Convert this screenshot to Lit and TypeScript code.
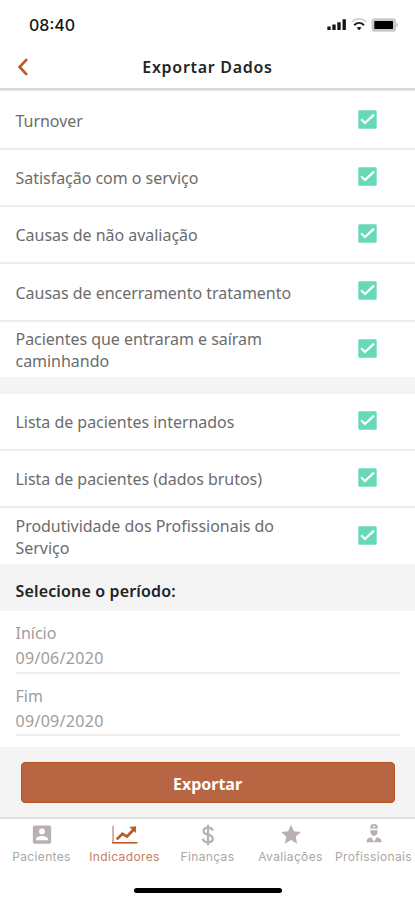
import { LitElement, html, svg, css } from "lit";
import { customElement, property } from "lit/decorators.js";
import { classMap } from "lit/directives/class-map.js";

@customElement("check-row")
class CheckRow extends LitElement {
  @property() label = "";
  static styles = css`
    :host { box-sizing: border-box; height: 57.3px; display: flex; align-items: center; padding: 0 38px 0 15.5px; background: #fff; border-bottom: 2px solid #ececec; }
    :host([last]) { height: 55.8px; border-bottom: 0; }
    .label { width: 290px; font-size: 16px; line-height: 21.6px; letter-spacing: -.03px; color: #6c6c6c; padding-top: 3px; }
    svg { width: 19px; height: 19px; margin-left: auto; margin-top: -2px; display: block; }
  `;
  render() {
    return html`<div class="label">${this.label}</div>
      <svg viewBox="0 0 19 19"><rect x=".3" y=".3" width="18.4" height="18.4" rx="1.3" fill="#67d9b8"/><path d="M3.2 9.2 7 13 16 4.6" fill="none" stroke="#fff" stroke-width="2.3"/></svg>`;
  }
}

const icons = {
  patients: svg`<path fill-rule="evenodd" d="M4 1.5h16a2 2 0 0 1 2 2v16a2 2 0 0 1-2 2H4a2 2 0 0 1-2-2v-16a2 2 0 0 1 2-2Zm8 3.4a3.2 3.2 0 1 0 0 6.4 3.2 3.2 0 0 0 0-6.4ZM5.5 17.6h13v-1.1c0-2.3-3.8-3.5-6.5-3.5s-6.5 1.2-6.5 3.5Z"/>`,
  chart: svg`<path d="M-1 2v18.5" stroke="#d7aa97" stroke-width="2"/><path d="M-2 20.5h27.5" stroke="currentColor" stroke-width="1.8"/><path d="m3 16.8 6.2-6.2 5 3.1 7-7.4" fill="none" stroke="currentColor" stroke-width="3"/><path d="m16.7 3.4 7.5-.9-.5 7.4Z"/>`,
  money: svg`<path d="M12 .8v22.4M17.1 7.2C16.7 5 14.8 4 12.1 4 9.2 4 7.2 5.4 7.2 7.8c0 5.2 10 2.4 10 8 0 2.6-2.2 4.2-5.2 4.2-3.2 0-5.2-1.5-5.5-4" fill="none" stroke="currentColor" stroke-width="2.5"/>`,
  star: svg`<path d="m12 .8 3.2 7.1 7.5.8-5.6 5.1 1.7 7.7-6.8-4-6.8 4 1.7-7.7-5.6-5.1 7.5-.8Z"/>`,
  worker: svg`<path d="M8 5.3V3.2C8 .9 9.5 0 12 0s4 .9 4 3.2v2.1Z"/><path d="M10.3 3h3.4M12 1.5v3" stroke="#fff" stroke-width=".7"/><path d="M8 6.8h8v1.4c0 2.6-1.6 4.8-4 4.8s-4-2.2-4-4.8Z"/><path d="M3.7 20c0-3.6 1.9-5.3 5.3-5.6l2.7 4.4V20Zm16.6 0c0-3.6-1.9-5.3-5.3-5.6l-2.7 4.4V20Z"/>`,
};

@customElement("app-root")
class AppRoot extends LitElement {
  static styles = css`
    :host { display: flex; flex-direction: column; box-sizing: border-box; width: 415px; height: 900px; overflow: hidden; background: #fff; font-family: "Noto Sans", "Open Sans", sans-serif; }
    .status { flex: none; display: flex; justify-content: space-between; align-items: center; height: 50px; padding: 0 17px 0 29px; box-sizing: border-box; font: 500 16px Inter, sans-serif; color: #151515; }
    .status svg { width: 74px; height: 16px; display: block; }
    header { flex: none; height: 40px; box-sizing: border-box; display: grid; grid-template-columns: 50px 1fr 50px; align-items: center; border-bottom: 2px solid #d8d8d8; box-shadow: 0 1px 1px #e8e8e8; margin-bottom: 2.4px; padding-bottom: 4px; z-index: 1; }
    header svg { width: 10px; height: 18px; margin-left: 18px; }
    h1 { margin: 0; text-align: center; font-size: 16px; font-weight: 600; line-height: 22px; letter-spacing: .7px; color: #252525; }
    .list { flex: none; display: flex; flex-direction: column; }
    .gap { flex: none; height: 16.3px; background: #f4f4f4; }
    .period { flex: none; height: 46.8px; box-sizing: border-box; display: flex; align-items: center; padding: 7px 15.5px 0; background: #f4f4f4; color: #222; font-size: 16px; font-weight: 600; letter-spacing: .15px; }
    .dates { flex: none; height: 135.7px; box-sizing: border-box; padding: 0 15px 0 15.5px; }
    .field { height: 62.7px; box-sizing: border-box; padding-top: 10px; border-bottom: 2px solid #eee; color: #a09c9b; font-size: 16px; line-height: 25.6px; }
    .date { letter-spacing: .3px; }
    .action { flex: none; height: 72.2px; box-sizing: border-box; padding: 15.5px 20.5px; background: #f4f4f4; border-bottom: 2px solid #e0e0e0; }
    button { width: 100%; height: 40.5px; display: block; padding: 3px 0 0; border: 1.3px solid #b8501f; border-radius: 4px; background: #b86543; color: #fff; font: 700 16px "Noto Sans", sans-serif; }
    nav { flex: none; display: grid; grid-template-columns: repeat(5, 83px); height: 58px; }
    .tab { display: flex; flex-direction: column; align-items: center; padding-top: 5px; color: #aaa6a6; font: 12px/16px Inter, sans-serif; letter-spacing: .36px; white-space: nowrap; }
    .tab svg { width: 22px; height: 22px; margin-bottom: 3px; overflow: visible; color: #b9b1b1; fill: currentColor; }
    .tab.active { color: #ca7c5c; }
    .active svg { color: #bd5a2c; }
    .home { flex: none; width: 148px; height: 4.5px; margin: 11.4px auto 0; border-radius: 3px; background: #000; }
  `;
  render() {
    const metrics = ["Turnover", "Satisfação com o serviço", "Causas de não avaliação", "Causas de encerramento tratamento", "Pacientes que entraram e saíram caminhando"];
    const lists = ["Lista de pacientes internados", "Lista de pacientes (dados brutos)", "Produtividade dos Profissionais do Serviço"];
    const row = (label: string, i: number, all: string[]) => html`<check-row .label=${label} ?last=${i === all.length - 1}></check-row>`;
    const tabs: [string, unknown][] = [["Pacientes", icons.patients], ["Indicadores", icons.chart], ["Finanças", icons.money], ["Avaliações", icons.star], ["Profissionais", icons.worker]];
    return html`
      <div class="status"><span>08:40</span>
        <svg viewBox="0 0 74 16">
          <path d="M5 9.6v3.5M10 7.6v5.5M15 5.2v7.9M20.2 2.2v10.9" stroke="#151515" stroke-width="3.3"/>
          <path d="M28 5c4-4.3 10.5-4.3 14.2 0" fill="none" stroke="#ccc" stroke-width="1.6"/>
          <path d="M30.2 8.2c2.9-2.8 7-2.8 9.8 0" fill="none" stroke="#222" stroke-width="2"/>
          <path d="m32.7 10.7 2.4 2.6 2.4-2.6c-1.4-1-3.4-1-4.8 0Z" fill="#111"/>
          <rect x="47.5" y="1.2" width="24.6" height="13.6" rx="3.4" fill="#c9c7ca"/>
          <rect x="50.3" y="4" width="18.7" height="8.1" rx=".7"/>
          <path d="M72.4 5.7v4.6l1.5-1V6.7Z" fill="#c9c7ca"/>
        </svg>
      </div>
      <header>
        <svg viewBox="0 0 10 18"><path d="M9 1.2 1.6 9 9 16.8" fill="none" stroke="#bd5829" stroke-width="2.6"/></svg>
        <h1>Exportar Dados</h1>
      </header>
      <div class="list">${metrics.map(row)}</div>
      <div class="gap"></div>
      <div class="list">${lists.map(row)}</div>
      <div class="period">Selecione o período:</div>
      <div class="dates">
        <div class="field"><div>Início</div><div class="date">09/06/2020</div></div>
        <div class="field"><div>Fim</div><div class="date">09/09/2020</div></div>
      </div>
      <div class="action"><button>Exportar</button></div>
      <nav>${tabs.map(([name, icon], i) => html`<div class=${classMap({ tab: true, active: i === 1 })}><svg viewBox="0 0 24 24">${icon}</svg><span>${name}</span></div>`)}</nav>
      <div class="home"></div>`;
  }
}
